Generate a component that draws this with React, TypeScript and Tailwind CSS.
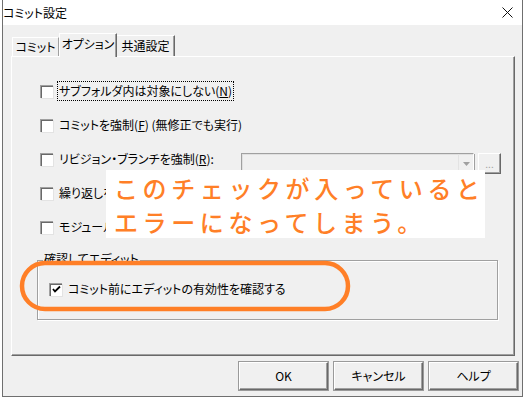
import React from "react";

const ui = "font-['Noto_Sans_CJK_JP','Noto_Sans',sans-serif] [font-feature-settings:'palt']";

function Check({ checked = false }: { checked?: boolean }) {
  return (
    <div className="w-[13px] h-[13px] shrink-0 bg-white border-t border-l border-[#a0a0a0] border-b-white border-r-white shadow-[inset_1px_1px_0_#696969,1px_1px_0_#e3e3e3] flex items-center justify-center">
      {checked && (
        <svg width="9" height="9" viewBox="0 0 9 9">
          <path d="M1 4 L3 6.5 L8 1.5" stroke="#000" strokeWidth="1.8" fill="none" />
        </svg>
      )}
    </div>
  );
}

function Row({ children, checked }: { children: React.ReactNode; checked?: boolean }) {
  return (
    <div className="flex items-center h-[20px]">
      <Check checked={checked} />
      <div className="ml-[4px] flex items-center">{children}</div>
    </div>
  );
}

function Btn({ children }: { children: React.ReactNode }) {
  return (
    <div className="w-[89px] h-[28px] flex items-center justify-center bg-[#f0f0f0] border border-t-white border-l-white border-b-[#696969] border-r-[#696969] shadow-[inset_-1px_-1px_0_#a0a0a0] text-[12px] text-black outline outline-1 outline-[#9a9a9a]">
      {children}
    </div>
  );
}

export default function App() {
  return (
    <div className={`relative w-[524px] h-[398px] bg-white overflow-hidden ${ui} text-[12px] leading-none text-black`}>
      <div className="ml-[2px] w-[521px] h-[397px] border-x border-b border-[#6f6f6f] bg-[#f0f0f0] flex flex-col">
        {/* title bar */}
        <div className="h-[25px] bg-white flex items-center justify-between pr-[9px]">
          <span className="text-[12px]">コミット設定</span>
          <svg width="11" height="11" viewBox="0 0 11 11">
            <path d="M0.5 0.5 L10.5 10.5 M10.5 0.5 L0.5 10.5" stroke="#111" strokeWidth="1" />
          </svg>
        </div>
        {/* tabs */}
        <div className="h-[31px] flex items-end pl-[9px] relative z-10">
          <div className="w-[47px] h-[19px] border-l border-t border-white border-r border-r-[#a0a0a0] flex items-center justify-center">
            コミット
          </div>
          <div className="w-[58px] h-[24px] -mb-[1px] bg-[#f0f0f0] border-l border-t border-white border-r border-r-[#696969] shadow-[inset_-1px_0_0_#a0a0a0] flex items-center justify-center pb-[3px]">
            オプション
          </div>
          <div className="w-[58px] h-[21px] border-t border-white border-r border-r-[#696969] shadow-[inset_-1px_0_0_#a0a0a0] flex items-center justify-center">
            共通設定
          </div>
        </div>
        {/* panel */}
        <div className="ml-[8px] w-[504px] h-[300px] border-t border-l border-white border-r border-b border-r-[#696969] border-b-[#696969] shadow-[inset_-1px_-1px_0_#a0a0a0] pt-[24px] pl-[28px] pr-[13px] flex flex-col">
          <div className="flex flex-col gap-[14px]">
            <Row>
              <span className="border border-dotted border-black px-[1px] py-[3px]">
                サブフォルダ内は対象にしない(<span className="underline">N</span>)
              </span>
            </Row>
            <Row>
              <span className="px-[2px]">
                コミットを強制(<span className="underline">F</span>) (無修正でも実行)
              </span>
            </Row>
            <div className="flex items-center h-[20px]">
              <Check />
              <span className="ml-[4px] px-[2px]">
                リビジョン・ブランチを強制(<span className="underline">R</span>):
              </span>
              <div className="ml-auto self-start mt-[4px] flex gap-[4px]">
                <div className="w-[233px] h-[22px] bg-[#f0f0f0] border border-[#a0a0a0] border-b-white border-r-white shadow-[inset_1px_1px_0_#e0e0e0,1px_1px_0_#a0a0a0] flex justify-end">
                  <div className="w-[15px] h-full flex items-center justify-center border-l border-[#e3e3e3]">
                    <svg width="7" height="4" viewBox="0 0 7 4">
                      <path d="M0 0 H7 L3.5 4 Z" fill="#a0a0a0" />
                    </svg>
                  </div>
                </div>
                <div className="w-[23px] h-[21px] border border-t-white border-l-white border-b-[#696969] border-r-[#696969] shadow-[inset_-1px_-1px_0_#a0a0a0] flex items-end justify-center pb-[4px] text-[10px] text-[#a0a0a0]">
                  ...
                </div>
              </div>
            </div>
            <Row>
              <span className="pl-[2px]">繰り返しを</span>
            </Row>
            <Row>
              <span className="pl-[2px]">モジュール</span>
            </Row>
          </div>
          {/* group box */}
          <div className="relative mt-[23px] -ml-[3px] w-[461px] h-[60px] border border-[#a0a0a0] shadow-[inset_1px_1px_0_#fff,1px_1px_0_#fff] pt-[18px] pl-[11px]">
            <span className="absolute left-[5px] -top-[8px] bg-[#f0f0f0] px-[1px]">確認してエディット</span>
            <Row checked>
              <span className="px-[2px]">コミット前にエディットの有効性を確認する</span>
            </Row>
          </div>
        </div>
        {/* buttons */}
        <div className="mt-[6px] flex justify-end gap-[6px] pr-[4px]">
          <Btn>OK</Btn>
          <Btn>キャンセル</Btn>
          <Btn>ヘルプ</Btn>
        </div>
      </div>

      {/* annotation overlay */}
      <div className="absolute left-[106px] top-[170px] w-[379px] h-[68px] bg-white pl-[8px] pt-[1px] text-[#ff7f27] text-[24px] leading-[34px] tracking-[4.6px] font-medium [font-feature-settings:normal] font-['Noto_Sans_CJK_JP',sans-serif] whitespace-nowrap">
        <div>このチェックが入っていると</div>
        <div>エラーになってしまう。</div>
      </div>
      <svg className="absolute left-0 top-0 pointer-events-none" width="524" height="398">
        <rect x="22" y="263" width="326" height="46" rx="23" ry="23" fill="none" stroke="#ff7f27" strokeWidth="4.5" />
      </svg>
    </div>
  );
}
